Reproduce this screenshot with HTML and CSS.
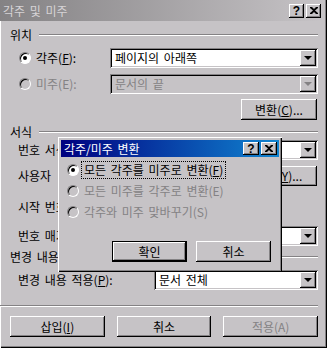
FILE: index.html
```html
<!DOCTYPE html>
<html>
<head>
  <title>각주 및 미주</title>
  <link rel="stylesheet" href="styles.css">
</head>
<body>
  <div class="window">
    <div class="titlebar inactive">
      <span class="title">각주 및 미주</span>
      <div class="tbtns">
        <span class="tbtn help">?</span>
        <span class="tbtn close"><svg width="8" height="7" viewBox="0 0 8 7"><path d="M0 0h2l2 2 2-2h2v1l-3 2.5 3 2.5v1h-2l-2-2-2 2h-2v-1l3-2.5-3-2.5z" fill="#000"/></svg></span>
      </div>
    </div>

    <div class="content">
      <div class="legend first"><span>위치</span></div>

      <div class="row r-foot">
        <span class="radio checked"></span>
        <span class="label">각주(<u>F</u>):</span>
        <div class="combo wide"><span class="value">페이지의 아래쪽</span><span class="arrow"></span></div>
      </div>
      <div class="row r-end">
        <span class="radio disabled"></span>
        <span class="label off">미주(E):</span>
        <div class="combo wide disabled"><span class="value">문서의 끝</span><span class="arrow"></span></div>
      </div>
      <div class="row r-convert">
        <span class="button convert">변환(<u>C</u>)...</span>
      </div>

      <div class="legend"><span>서식</span></div>

      <div class="row r-format">
        <span class="label indent">번호 서식</span>
        <div class="combo mid"><span class="value"></span><span class="arrow"></span></div>
      </div>
      <div class="row r-custom">
        <span class="label indent">사용자</span>
        <div class="field"></div>
        <span class="button symbol">기호(<u>Y</u>)...</span>
      </div>
      <div class="row r-start">
        <span class="label indent">시작 번호</span>
        <div class="field spin"></div>
      </div>
      <div class="row r-numbering">
        <span class="label indent">번호 매기기</span>
        <div class="combo mid"><span class="value"></span><span class="arrow"></span></div>
      </div>

      <div class="legend"><span>변경 내용</span></div>

      <div class="row r-apply">
        <span class="label indent">변경 내용 적용(<u>P</u>):</span>
        <div class="combo mid"><span class="value">문서 전체</span><span class="arrow"></span></div>
      </div>

      <div class="separator"></div>

      <div class="row r-buttons">
        <span class="button big">삽입(<u>I</u>)</span>
        <span class="button big">취소</span>
        <span class="button big off">적용(A)</span>
      </div>
    </div>

    <div class="dialog">
      <div class="titlebar active">
        <span class="title">각주/미주 변환</span>
        <div class="tbtns">
          <span class="tbtn help">?</span>
          <span class="tbtn close"><svg width="8" height="7" viewBox="0 0 8 7"><path d="M0 0h2l2 2 2-2h2v1l-3 2.5 3 2.5v1h-2l-2-2-2 2h-2v-1l3-2.5-3-2.5z" fill="#000"/></svg></span>
        </div>
      </div>
      <div class="option first">
        <span class="radio checked"></span>
        <span class="label focus">모든 각주를 미주로 변환(<u>F</u>)</span>
      </div>
      <div class="option">
        <span class="radio disabled"></span>
        <span class="label off">모든 미주를 각주로 변환(E)</span>
      </div>
      <div class="option">
        <span class="radio disabled"></span>
        <span class="label off">각주와 미주 맞바꾸기(S)</span>
      </div>
      <div class="dlg-buttons">
        <span class="button default">확인</span>
        <span class="button">취소</span>
      </div>
    </div>
  </div>
</body>
</html>
```

FILE: styles.css
```css
body {
  margin: 0;
  font-family: "Noto Sans CJK KR", "Noto Sans", sans-serif;
  font-size: 12px;
  line-height: 14px;
  word-spacing: 2px;
  color: #000;
}

.window {
  position: relative;
  width: 327px;
  height: 348px;
  box-sizing: border-box;
  padding: 0 4px 3px 0;
  background-color: #c6c3c6;
  box-shadow: inset 1px 0 #fff, inset -1px -1px #000, inset -2px -2px #848284;
  overflow: hidden;
}

/* title bars */
.titlebar {
  display: flex;
  align-items: center;
  height: 21px;
  padding-left: 3px;
  box-sizing: border-box;
}

.titlebar.inactive {
  background: linear-gradient(to right, #848284, #c6c3c6);
  color: #d6d3d6;
}

.titlebar.active {
  height: 17px;
  background: linear-gradient(to right, #000080, #1084d0);
  color: #fff;
}

.title {
  flex: 1;
  white-space: nowrap;
}

.tbtns {
  display: flex;
  gap: 2px;
  margin-right: 2px;
}

.tbtn {
  display: flex;
  align-items: center;
  justify-content: center;
  width: 15px;
  height: 14px;
  background-color: #c6c3c6;
  box-shadow: inset -1px -1px #000, inset 1px 1px #fff, inset -2px -2px #848284;
  font-family: "Liberation Sans", sans-serif;
  font-weight: bold;
  font-size: 12px;
  color: #000;
}

.active .tbtn {
  width: 16px;
  height: 13px;
}

/* main content */
.content {
  padding: 0 5px 0 10px;
}

.legend {
  display: flex;
  align-items: center;
  height: 14px;
  margin-top: 5px;
}

.legend.first {
  margin-top: 7px;
}

.legend::after {
  content: "";
  flex: 1;
  margin-left: 7px;
  border-top: 1px solid #848284;
  border-bottom: 1px solid #fff;
}

.row {
  display: flex;
  align-items: center;
  height: 20px;
  white-space: nowrap;
}

.r-foot { margin-top: 6px; }
.r-end { margin-top: 6px; }
.r-convert { margin-top: 5px; height: 21px; justify-content: flex-end; }
.r-format { margin-top: 1px; }
.r-custom { margin-top: 6px; }
.r-start { margin-top: 11px; }
.r-numbering { margin-top: 9px; }
.r-apply { margin-top: 6px; }
.r-buttons { margin-top: 9px; height: 21px; gap: 12px; }

.r-numbering + .legend { margin-top: 4px; }

.label.indent {
  margin-left: 8px;
}

.label.off {
  color: #848284;
}

.r-foot .label,
.r-end .label {
  margin-left: 5px;
}

.radio {
  position: relative;
  display: inline-block;
  flex: none;
  width: 12px;
  height: 12px;
  box-sizing: border-box;
  border-radius: 50%;
  border: 1px solid;
  border-color: #848284 #fff #fff #848284;
  box-shadow: inset 1px 1px #000;
  background-color: #fff;
}

.row .radio {
  margin-left: 9px;
}

.radio.disabled {
  background-color: #c6c3c6;
}

.radio.checked::after {
  content: "";
  position: absolute;
  left: 3px;
  top: 3px;
  width: 4px;
  height: 4px;
  border-radius: 50%;
  background-color: #000;
}

/* sunken controls */
.combo,
.field {
  display: flex;
  align-items: center;
  height: 20px;
  box-sizing: border-box;
  padding: 2px;
  background-color: #fff;
  box-shadow: inset 1px 1px #848284, inset -1px -1px #fff, inset 2px 2px #000, inset -2px -2px #c6c3c6;
}

.combo.wide {
  width: 208px;
  margin-left: auto;
}

.combo.mid {
  width: 164px;
  margin-left: auto;
}

.combo.disabled {
  background-color: #c6c3c6;
  color: #848284;
}

.combo .value {
  flex: 1;
  padding-left: 3px;
}

.combo .arrow {
  position: relative;
  width: 16px;
  height: 16px;
  background-color: #c6c3c6;
  box-shadow: inset -1px -1px #000, inset 1px 1px #fff, inset -2px -2px #848284;
}

.combo .arrow::after {
  content: "";
  position: absolute;
  left: 4px;
  top: 6px;
  border-left: 4px solid transparent;
  border-right: 4px solid transparent;
  border-top: 4px solid #000;
}

.combo.disabled .arrow::after {
  border-top-color: #848284;
}

.field {
  width: 90px;
  margin-left: auto;
  margin-right: 6px;
  padding-left: 4px;
}

.field.spin {
  width: 60px;
  margin-right: 100px;
}

/* buttons */
.button {
  display: flex;
  align-items: center;
  justify-content: center;
  box-sizing: border-box;
  height: 21px;
  background-color: #c6c3c6;
  box-shadow: inset -1px -1px #000, inset 1px 1px #fff, inset -2px -2px #848284;
  white-space: nowrap;
}

.button.convert {
  width: 76px;
  margin-right: 1px;
}

.button.symbol {
  width: 76px;
  height: 20px;
  margin-right: 1px;
}

.button.big {
  width: 95px;
}

.button.off {
  color: #848284;
}

.separator {
  margin: 15px 0 0 -10px;
  border-top: 1px solid #848284;
  border-bottom: 1px solid #fff;
}

/* the dialog that lies over the main window */
.dialog {
  position: absolute;
  left: 58px;
  top: 137px;
  width: 224px;
  height: 135px;
  box-sizing: border-box;
  padding: 3px;
  background-color: #c6c3c6;
  box-shadow: inset 1px 1px #fff, inset -1px -1px #000, inset -2px -2px #848284;
}

.option {
  display: flex;
  align-items: center;
  height: 21px;
  padding-left: 6px;
  white-space: nowrap;
}

.option.first {
  margin-top: 2px;
}

.option .label {
  margin-left: 3px;
  padding: 1px 2px;
}

.option .label.focus {
  outline: 1px dotted #000;
}

.dlg-buttons {
  display: flex;
  gap: 9px;
  margin: 19px 0 0 51px;
}

.dlg-buttons .button {
  width: 75px;
}

.button.default {
  box-shadow: inset 0 0 0 1px #000, inset -2px -2px #000, inset 2px 2px #fff, inset -3px -3px #848284;
}
```
